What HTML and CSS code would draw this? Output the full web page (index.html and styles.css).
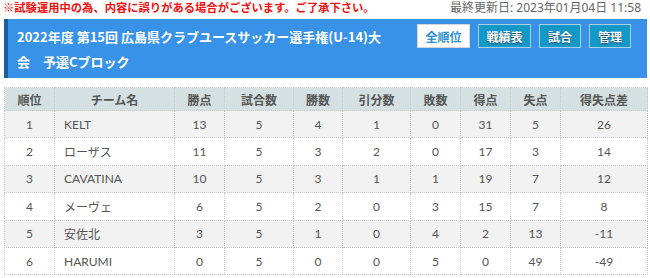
FILE: index.html
```html
<!DOCTYPE html>
<html lang="ja">
<head>
<meta charset="utf-8">
<link rel="stylesheet" href="styles.css">
</head>
<body>
<div class="page">
  <div class="topbar">
    <span class="notice">※試験運用中の為、内容に誤りがある場合がございます。ご了承下さい。</span>
    <span class="updated">最終更新日: 2023年01月04日 11:58</span>
  </div>
  <div class="header">
    <h1 class="title">2022年度 第15回 広島県クラブユースサッカー選手権(U-14)大会　予選Cブロック</h1>
    <div class="btns">
      <span class="btn active">全順位</span>
      <span class="btn">戦績表</span>
      <span class="btn small">試合</span>
      <span class="btn small">管理</span>
    </div>
  </div>
  <table class="standings">
    <colgroup>
      <col style="width:50px"><col style="width:120px"><col style="width:50px"><col style="width:69px"><col style="width:49px"><col style="width:68px"><col style="width:50px"><col style="width:50px"><col style="width:50px"><col style="width:87px">
    </colgroup>
    <thead>
      <tr><th>順位</th><th>チーム名</th><th>勝点</th><th>試合数</th><th>勝数</th><th>引分数</th><th>敗数</th><th>得点</th><th>失点</th><th>得失点差</th></tr>
    </thead>
    <tbody>
      <tr><td>1</td><td class="team">KELT</td><td>13</td><td>5</td><td>4</td><td>1</td><td>0</td><td>31</td><td>5</td><td>26</td></tr>
      <tr><td>2</td><td class="team">ローザス</td><td>11</td><td>5</td><td>3</td><td>2</td><td>0</td><td>17</td><td>3</td><td>14</td></tr>
      <tr><td>3</td><td class="team">CAVATINA</td><td>10</td><td>5</td><td>3</td><td>1</td><td>1</td><td>19</td><td>7</td><td>12</td></tr>
      <tr><td>4</td><td class="team">メーヴェ</td><td>6</td><td>5</td><td>2</td><td>0</td><td>3</td><td>15</td><td>7</td><td>8</td></tr>
      <tr><td>5</td><td class="team">安佐北</td><td>3</td><td>5</td><td>1</td><td>0</td><td>4</td><td>2</td><td>13</td><td>-11</td></tr>
      <tr><td>6</td><td class="team">HARUMI</td><td>0</td><td>5</td><td>0</td><td>0</td><td>5</td><td>0</td><td>49</td><td>-49</td></tr>
    </tbody>
  </table>
</div>
</body>
</html>
```
FILE: styles.css
```css
* { box-sizing: border-box; }
body {
  margin: 0;
  background: #fff;
  font-family: Lato, "Noto Sans CJK JP", sans-serif;
  color: #555;
}
.page {
  padding: 0 3px 0 4px;
}
.topbar {
  display: flex;
  justify-content: space-between;
  align-items: center;
  height: 19px;
  padding: 0 6px 4px 0;
  margin-left: -1px;
}
.notice {
  color: #f01010;
  font-weight: bold;
  font-size: 11.3px;
  font-family: "Noto Sans CJK JP", sans-serif;
  line-height: 15px;
}
.updated {
  color: #666;
  font-size: 12px;
  font-family: "Noto Sans", "Noto Sans CJK JP", sans-serif;
  line-height: 15px;
}
.header {
  display: flex;
  justify-content: space-between;
  align-items: flex-start;
  background: #3892e8;
  border-left: 4px solid #1b5d9d;
  padding: 5px 16px 5px 9px;
  height: 59px;
}
.title {
  margin: 0;
  color: #fff;
  font-family: "Noto Sans CJK JP", sans-serif;
  font-weight: bold;
  font-size: 13px;
  line-height: 25px;
  width: 372px;
  flex: none;
}
.btns {
  display: flex;
  gap: 8px;
}
.btn {
  display: flex;
  align-items: center;
  justify-content: center;
  width: 53px;
  height: 24px;
  font-family: "Noto Sans CJK JP", sans-serif;
  font-weight: bold;
  font-size: 12px;
  color: #fff;
  background: #1498c8;
  border: 1px solid #a8cfe2;
  text-shadow: 0 1px 1px #1a4a6a;
}
.btn.small { width: 42px; }
.btn.active {
  background: #fff;
  color: #2a8ed6;
  border-color: #d6d6d6;
  text-shadow: none;
}
.standings {
  margin-top: 9px;
  width: 643px;
  border-collapse: collapse;
  table-layout: fixed;
  font-size: 12px;
}
.standings th, .standings td {
  border: 1px dotted #c8c8c8;
  text-align: center;
  padding: 0;
}
.standings th {
  background: #d4e0e1;
  font-family: "Noto Sans CJK JP", sans-serif;
  font-weight: bold;
  color: #555;
  height: 23px;
}
.standings td {
  height: 27.4px;
  color: #555;
}
.standings tbody tr:nth-child(odd) td { background: #f2f2f2; }
.standings td.team {
  text-align: left;
  padding-left: 9px;
}
```
